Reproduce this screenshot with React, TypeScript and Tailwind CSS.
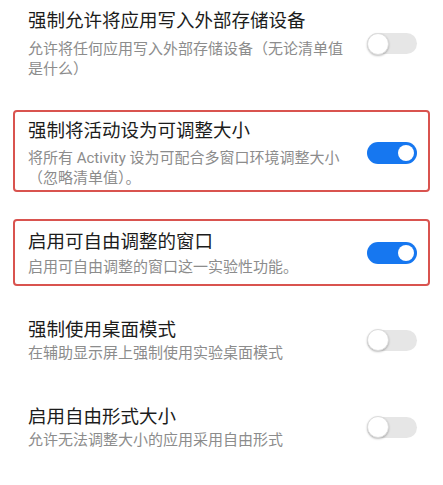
import React from 'react'

interface SettingRow {
  title: string
  summary: string
  checked: boolean
  highlighted: boolean
  // spacing tuned per row
  wrap: string
  gap: string
}

const ROWS: SettingRow[] = [
  {
    title: '强制允许将应用写入外部存储设备',
    summary: '允许将任何应用写入外部存储设备（无论清单值是什么）',
    checked: false,
    highlighted: false,
    wrap: 'mt-0 pt-[6px] pb-0',
    gap: 'mt-[5px]',
  },
  {
    title: '强制将活动设为可调整大小',
    summary: '将所有 Activity 设为可配合多窗口环境调整大小（忽略清单值）。',
    checked: true,
    highlighted: true,
    wrap: 'mt-[29px] pt-[6px] pb-[2px]',
    gap: 'mt-[4px]',
  },
  {
    title: '启用可自由调整的窗口',
    summary: '启用可自由调整的窗口这一实验性功能。',
    checked: true,
    highlighted: true,
    wrap: 'mt-[27px] pt-[8px] pb-[7px]',
    gap: 'mt-[2px]',
  },
  {
    title: '强制使用桌面模式',
    summary: '在辅助显示屏上强制使用实验桌面模式',
    checked: false,
    highlighted: false,
    wrap: 'mt-[21px] pt-[8px] pb-[7px]',
    gap: 'mt-0',
  },
  {
    title: '启用自由形式大小',
    summary: '允许无法调整大小的应用采用自由形式',
    checked: false,
    highlighted: false,
    wrap: 'mt-[22px] pt-[8px] pb-[7px]',
    gap: 'mt-0',
  },
]

function Toggle({ checked }: { checked: boolean }) {
  if (checked) {
    return (
      <div className="relative h-[22px] w-[50px] shrink-0 rounded-full bg-[#1677f0]">
        <div className="absolute right-[3px] top-[3px] h-[16px] w-[16px] rounded-full bg-white" />
      </div>
    )
  }
  return (
    <div className="relative flex h-[24px] w-[50px] shrink-0 items-center">
      <div className="h-[21px] w-[50px] rounded-full bg-[#e6e6e6]" />
      <div className="absolute left-0 top-[1px] h-[22px] w-[22px] rounded-full border border-[#dcdcdc] bg-white shadow-[0_1px_2px_rgba(0,0,0,0.25)]" />
    </div>
  )
}

export default function App() {
  return (
    <div
      className="flex min-h-[485px] w-[443px] flex-col bg-white"
      style={{ fontFamily: 'Roboto, "Noto Sans CJK SC", sans-serif' }}
    >
      {ROWS.map((row) => (
        <div
          key={row.title}
          className={`mx-[13px] flex items-center rounded-[4px] border-2 pl-[13px] pr-[11px] ${row.wrap} ${
            row.highlighted ? 'border-[#d9534f]' : 'border-transparent'
          }`}
        >
          <div className="mr-[20px] min-w-0 flex-1">
            <div className="text-[18.5px] leading-[26px] text-[#1c1c1c]">{row.title}</div>
            <div className={`text-[15px] leading-[20px] text-[#8c8c8c] ${row.gap}`}>{row.summary}</div>
          </div>
          <Toggle checked={row.checked} />
        </div>
      ))}
    </div>
  )
}
